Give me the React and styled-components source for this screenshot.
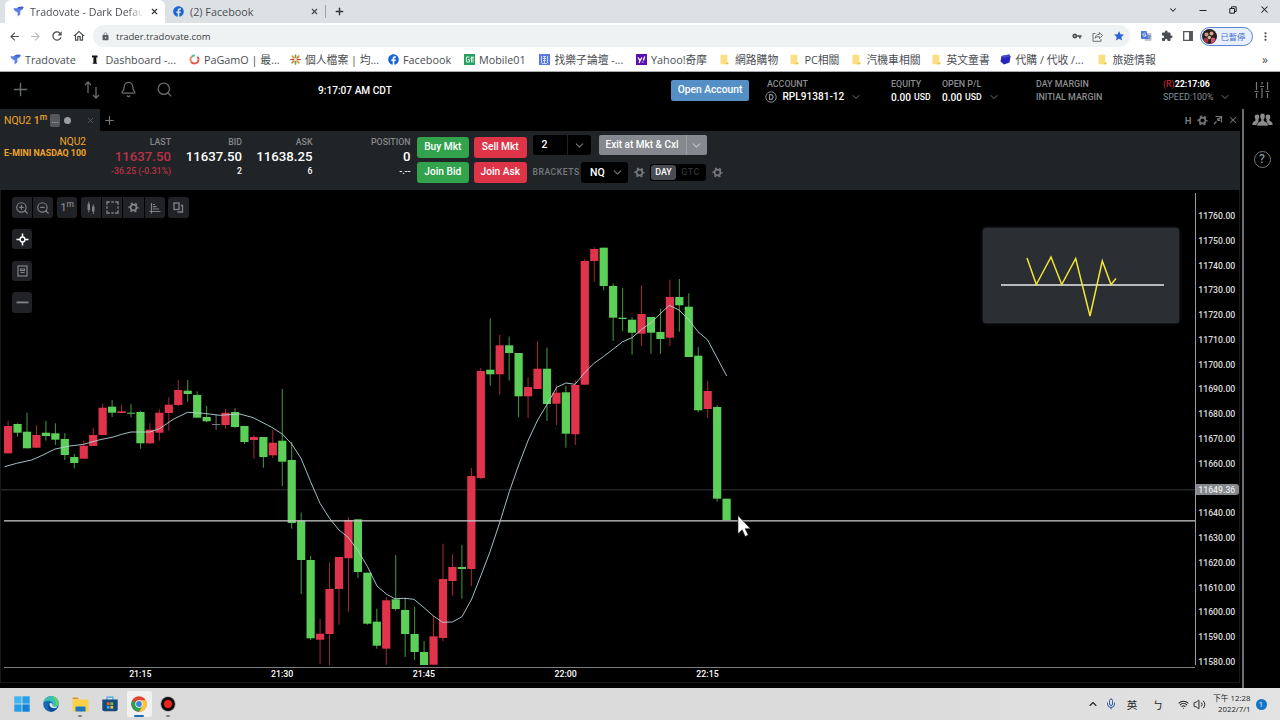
import styled, { createGlobalStyle, css } from 'styled-components'
import { FaFacebook } from 'react-icons/fa'
import { MdArrowBack, MdArrowForward, MdRefresh, MdOutlineHome, MdLock, MdVpnKey, MdStar, MdExtension, MdMoreVert } from 'react-icons/md'
import { Bell, ChevronDown, ChevronUp, Mic, Plus, Search, Volume2, Wifi, X, ZoomIn, ZoomOut } from 'lucide-react'

const UP = '#e0344c'
const DOWN = '#5bcf57'
const FLAT = '#8f9499'

// type, body top, body bottom, wick top, wick bottom
const candles = [
    ['u', 426, 453.3, 420.7, 453.3],
    ['d', 424, 432.7, 423.3, 436.7],
    ['d', 431.7, 448.3, 412.7, 448.3],
    ['u', 435, 447.7, 425.3, 448],
    ['d', 432.7, 436, 421, 440.7],
    ['d', 433.3, 439.7, 423.3, 445],
    ['d', 439, 455, 433, 460],
    ['d', 457, 463, 454, 468.3],
    ['u', 445.7, 458.7, 440.7, 458.7],
    ['u', 435, 446, 427.7, 446],
    ['u', 407.7, 435, 403.7, 435],
    ['d', 406.7, 412.7, 400, 417],
    ['u', 411.3, 413, 404.7, 413],
    ['d', 412.7, 413.7, 404, 417.3],
    ['d', 412, 443.3, 411, 448.7],
    ['u', 429.7, 443.3, 423.3, 444],
    ['u', 412.7, 432.7, 409.3, 440.7],
    ['u', 404.7, 413, 397.3, 430.7],
    ['u', 390, 405, 380, 406],
    ['d', 390.7, 394, 380, 401.7],
    ['d', 395, 417.7, 391.3, 417.7],
    ['d', 417, 421.3, 406, 422.3],
    ['f', 424, 424.8, 414.7, 430],
    ['u', 412.7, 425, 408.7, 429],
    ['d', 412, 427, 408.3, 428],
    ['d', 426, 442, 426, 444],
    ['u', 437, 440, 435, 458.7],
    ['d', 437, 457, 437, 467.7],
    ['u', 442.7, 455.3, 430, 458],
    ['d', 440.7, 461.7, 389, 486],
    ['d', 460, 523, 442, 528.7],
    ['d', 520.7, 560, 512.7, 594],
    ['d', 560, 638.3, 556, 640],
    ['u', 633.7, 639.7, 618.7, 664],
    ['u', 589, 634, 562.3, 665],
    ['u', 557, 589, 557, 624.7],
    ['u', 520, 558.3, 517.3, 611.7],
    ['d', 519.3, 572, 519.3, 578],
    ['d', 572.7, 623.7, 572.7, 624.7],
    ['d', 621.7, 645.7, 608.7, 648.7],
    ['u', 600.3, 648.7, 597.3, 664.7],
    ['d', 599.3, 609, 555, 610.7],
    ['d', 610, 634, 598, 657],
    ['d', 634, 652, 606.7, 660],
    ['d', 652, 665, 641, 665],
    ['u', 636.3, 664.7, 616, 664.7],
    ['u', 579, 638, 543.7, 641.3],
    ['u', 567, 581, 554.3, 595.7],
    ['d', 567, 569, 545, 598.7],
    ['u', 476, 569, 468, 586],
    ['u', 371, 478, 368, 479.3],
    ['d', 369.7, 374.3, 318.3, 385.7],
    ['u', 345.3, 374.3, 334.7, 394.7],
    ['d', 345.3, 353, 336.7, 380.7],
    ['d', 353, 396.3, 353, 417.3],
    ['u', 387, 396.3, 377.3, 418],
    ['u', 368.7, 389, 341, 389],
    ['d', 368.7, 404, 347.7, 421],
    ['u', 392.7, 403.7, 385.3, 425],
    ['d', 392.3, 433.7, 385.7, 447.7],
    ['u', 385, 434.3, 380.3, 445],
    ['u', 261, 384.7, 259, 384.7],
    ['u', 249, 261, 247.3, 281.7],
    ['d', 247.7, 286, 247.7, 290.3],
    ['d', 286, 317.7, 283.3, 341],
    ['d', 317.7, 319, 288, 331.3],
    ['d', 319.7, 332.7, 317.3, 354.7],
    ['u', 314, 333.7, 285.3, 345.7],
    ['d', 317, 332.7, 317, 353.7],
    ['d', 332, 339, 308.7, 354],
    ['u', 297, 337.7, 279.7, 346.3],
    ['d', 297, 305.3, 279, 331.7],
    ['d', 306.7, 357, 293.3, 357],
    ['d', 355.7, 410.3, 347, 412.3],
    ['u', 391, 409, 381, 418],
    ['d', 407, 498.7, 405, 501.7],
    ['d', 498.7, 520, 498.7, 520],
]

const average = '4.5,466.7 16.7,463.3 31.7,460 43,455 55,449 70,446 83.5,444.3 100,439.7 113.3,437 121.7,434.3 131,432 150,432 159.4,428.7 173.3,419.3 187.5,412.3 203.3,413.3 220,415.3 240,414 253.3,417.7 271.7,427.3 282.3,434 291.7,444 301,458.3 310.6,481.7 320,503.3 329.5,518.3 339,530 348.5,537.7 358,550.7 367.5,566.7 377,586 386.7,594.3 395,598.7 405,598.3 414,599.3 424,607.7 433.5,616 442.7,622.3 452.3,622 462,616.7 471.7,599 481,575.3 490,551.7 500,521.7 509.3,491.7 518.7,465 528.3,440 537.7,420 546.7,405 556.7,387.3 566,383 575,384.3 584.7,372.7 594,363.3 603.3,356.7 613.3,349 622.7,341.7 632,337.7 641.7,329.3 651,322.7 660,314 669.3,305.3 679,310 688.7,319.7 698,331.7 707.7,340 726.7,376'

const prices = Array.from({ length: 19 }, (_, i) => (11760 - i * 10).toFixed(2))

const bookmarks = [
    { icon: 'tradovate', text: 'Tradovate', width: 80.5 },
    { icon: 'dash', text: 'Dashboard -...', width: 98.5 },
    { icon: 'pagamo', text: 'PaGamO | 最...', width: 101 },
    { icon: 'slack', text: '個人檔案 | 均...', width: 98 },
    { icon: 'facebook', text: 'Facebook', width: 76 },
    { icon: 'mobile', text: 'Mobile01', width: 75.5 },
    { icon: 'forum', text: '找樂子論壇 -...', width: 96.5 },
    { icon: 'yahoo', text: 'Yahoo!奇摩', width: 83.5 },
    { icon: 'folder', text: '網路購物', width: 69.5 },
    { icon: 'folder', text: 'PC相關', width: 62 },
    { icon: 'folder', text: '汽機車相關', width: 80 },
    { icon: 'folder', text: '英文童書', width: 69.5 },
    { icon: 'buy', text: '代購 / 代收 /...', width: 96.5 },
    { icon: 'folder', text: '旅遊情報', width: 70 },
]

function TradovateLogo({ size = 11 }) {
    return (
        <svg width={size} height={size} viewBox="0 0 12 12">
            <path d="M.5 2.500h4C6 .8 9 .6 11.500 1.200 11.400 3.500 10 4.800 8 5v4L5 11.500V6.800C2.800 6.400 1 5 .5 2.500z" fill="#5b80e6" />
            <path d="M4.500 2.500C6 .8 9 .6 11.500 1.200 10.500 2.800 8.600 3.400 4.500 2.500z" fill="#3a5bc8" />
        </svg>
    )
}

function BookmarkIcon({ name }) {
    if (name === 'tradovate') return <TradovateLogo />
    if (name === 'facebook') return <FaFacebook size={11} color="#1a66d6" />
    if (name === 'dash') return (
        <svg width="11" height="11" viewBox="0 0 11 11"><path d="M2 1.500h5.500v2.400l-1-.9h-.1v5.800h.7v.9H2.600v-.9h.8V3h-.2L2 3.900z" fill="#111" /></svg>
    )
    if (name === 'pagamo') return (
        <svg width="11" height="11" viewBox="0 0 11 11" fill="none" strokeWidth="2">
            <path d="M9.5 5.5a4 4 0 0 1-4 4 4 4 0 0 1-3.5-2" stroke="#e2574a" />
            <path d="M2 7.5a4 4 0 0 1 1-5" stroke="#e98a73" />
            <path d="M3 2.500a4 4 0 0 1 3-.9" stroke="#4ec0a8" />
            <path d="M8.300 2.600a4 4 0 0 1 1.200 2.900" stroke="#e2574a" />
        </svg>
    )
    if (name === 'slack') return (
        <svg width="11" height="11" viewBox="0 0 11 11" fill="none" strokeWidth="1.700" strokeLinecap="round">
            <path d="M5.500 1v2.500M5.500 7.500V10" stroke="#6aa64a" />
            <path d="M1 5.500h2.500M7.500 5.500H10" stroke="#c9513f" />
            <path d="M2.200 2.200L4 4M7 7l1.800 1.800" stroke="#d99a3c" />
            <path d="M8.800 2.200L7 4M4 7L2.200 8.800" stroke="#d9813c" />
        </svg>
    )
    if (name === 'mobile') return (
        <svg width="11" height="11" viewBox="0 0 11 11" fill="none" stroke="#d8f3e4">
            <rect width="11" height="11" fill="#27a062" stroke="none" />
            <path d="M5.500 3H2.500v5h3V5.500H4M7.500 2.500v6M9 2.500v6M6.500 4.500L9.500 3" />
        </svg>
    )
    if (name === 'forum') return (
        <svg width="11" height="11" viewBox="0 0 11 11" fill="none" stroke="#e5ebff">
            <rect width="11" height="11" fill="#5a7ce0" stroke="none" />
            <path d="M2.500 2v7M8.500 2v7M4 2.500h3M4 4.500h3M4 6.500h3M5.500 2v7M3 9.500h5" strokeWidth=".8" />
        </svg>
    )
    if (name === 'yahoo') return (
        <svg width="11" height="11" viewBox="0 0 11 11" fill="none" stroke="#fff" strokeWidth="1.300">
            <rect width="11" height="11" fill="#5a10b0" stroke="none" />
            <path d="M2 3.500l2 3.200L5.800 3.500M4 6.700L3.200 9M8.800 2.500L7.300 6.500M6.900 7.600l-.3.9" />
        </svg>
    )
    if (name === 'buy') return (
        <svg width="11" height="11" viewBox="0 0 11 11"><path d="M1.500 2L9 .5l1.500 2-1 6L4 10.500l-3.500-3z" fill="#2626b8" /><path d="M1.500 2L9 .5l1.500 2L3 4z" fill="#4747d6" /></svg>
    )
    return (
        <svg width="11" height="11" viewBox="0 0 11 11"><path d="M1.500 .7h6.800v7.500h1v2H1.500z" fill="#fbe081" /><path d="M8.300 8.200h1v2H5.500z" fill="#e8c65b" /></svg>
    )
}

function Gear({ size = 11, color = '#75787c' }) {
    return (
        <svg width={size} height={size} viewBox="0 0 12 12" fill="none" stroke={color}>
            <circle cx="6" cy="6" r="3.200" strokeWidth="1.800" />
            <circle cx="6" cy="6" r="4.700" strokeWidth="1.600" strokeDasharray="2.300 2.622" strokeDashoffset="1.150" />
        </svg>
    )
}

function Chart() {
    return (
        <Drawing viewBox="1 190 1195 478" width="1195" height="478">
            <rect x="1" y="489.300" width="1194" height="1" fill="#343638" />
            {candles.map(([type, top, bottom, high, low], i) => {
                const x = 8.100 + i * 9.454
                const fill = type === 'u' ? UP : type === 'd' ? DOWN : FLAT
                return (
                    <g key={i} fill={fill}>
                        <rect x={x - 0.5} y={high} width="1" height={low - high} opacity=".75" />
                        <rect x={x - 4.100} y={top} width="8.200" height={bottom - top} />
                    </g>
                )
            })}
            <polyline points={average} fill="none" stroke="#b4d3da" strokeWidth=".9" />
            <rect x="4" y="520.200" width="1191" height="1.300" fill="#c4c6c4" />
            <rect x="4" y="667" width="1191" height="1" fill="#7c7d7e" />
            <rect x="1195" y="193" width="1" height="472" fill="#9a9c9e" />
            <path d="M738 515.500v18.200l4.200-3.900 3 6.700 3-1.400-3-6.400h5.200z" fill="#fff" stroke="#222" strokeWidth=".6" />
        </Drawing>
    )
}

function BrowserBar() {
    return (
        <Browser>
            <TabStrip>
                <BrowserTab $active>
                    <TradovateLogo size={11} />
                    <TabTitle $fade>Tradovate - Dark Defau</TabTitle>
                    <X size={9} strokeWidth={3} color="#333" />
                </BrowserTab>
                <BrowserTab>
                    <FaFacebook size={11} color="#1a66d6" />
                    <TabTitle>(2) Facebook</TabTitle>
                    <X size={9} strokeWidth={3} color="#444" />
                </BrowserTab>
                <NewTab><Plus size={11} strokeWidth={3} color="#333" /></NewTab>
                <WindowButtons>
                    <ChevronDown size={10} strokeWidth={2.500} />
                    <svg width="8" height="8" viewBox="0 0 8 8" stroke="#222"><path d="M.5 4.500h7" /></svg>
                    <svg width="8" height="8" viewBox="0 0 8 8" fill="none" stroke="#222"><path d="M.8 2.500h4.700v4.700H.8zM2.500 2.500v-1.700h4.700v4.700H5.500" /></svg>
                    <X size={11} strokeWidth={2.300} />
                </WindowButtons>
            </TabStrip>
            <AddressRow>
                <NavButtons>
                    <MdArrowBack size={13} />
                    <MdArrowForward size={13} color="#b6b9bc" />
                    <MdRefresh size={14} />
                    <MdOutlineHome size={14} />
                </NavButtons>
                <AddressBar>
                    <MdLock size={9} color="#5c6064" />
                    <Url>trader.tradovate.com</Url>
                    <MdVpnKey size={10} />
                    <svg width="11" height="11" viewBox="0 0 11 11" fill="none" stroke="#5f6368" strokeWidth=".9"><path d="M3.500 2.500H1v7.800h8V8M3 7.200C3.400 4.500 5 3.500 7.300 3.400V1.500l3.200 3-3.200 3V5.600C5.500 5.500 4.200 6 3 7.200z" /></svg>
                    <MdStar size={12} color="#2a63d8" />
                </AddressBar>
                <Extensions>
                    <svg width="12" height="12" viewBox="0 0 12 12">
                        <rect x="4.500" y="3" width="7" height="8" rx="1" fill="#c3c8ce" />
                        <path d="M1 1h5.500l2 8H2a1 1 0 0 1-1-1z" fill="#4a78dc" />
                        <path d="M5.700 4a1.500 1.500 0 1 0 .2 1H4.600" fill="none" stroke="#fff" strokeWidth=".8" />
                        <path d="M7.500 6h3.500M9 5v1M10.300 6c-.3 1.500-1 2.500-2 3.200M8.500 7l2 2.200" fill="none" stroke="#4a66b8" strokeWidth=".7" />
                    </svg>
                    <MdExtension size={12} />
                    <svg width="10" height="10" viewBox="0 0 10 10"><path d="M.7.7h8.600v8.600H.7z" fill="none" stroke="#55585c" strokeWidth="1.300" /><path d="M6 .7h3.300v8.600H6z" fill="#55585c" /></svg>
                </Extensions>
                <Profile>
                    <svg width="15" height="15" viewBox="0 0 15 15">
                        <circle cx="7.500" cy="7.500" r="7.500" fill="#2a2022" />
                        <circle cx="4.500" cy="5.500" r="2" fill="#c99a80" />
                        <circle cx="9.500" cy="4.500" r="2" fill="#d3a68c" />
                        <path d="M1.500 11c1-3 4-3 5 0l-1 3c-2-.3-3.300-1.500-4-3z" fill="#a33a44" />
                        <circle cx="7.300" cy="8.500" r="1.700" fill="#dcb39c" />
                        <path d="M9 9.500c2-2 4-1 4.500 1-.8 2-2.300 3.300-4.300 3.900z" fill="#d4536a" />
                    </svg>
                    已暫停
                </Profile>
                <MdMoreVert size={13} />
            </AddressRow>
            <BookmarkRow>
                {bookmarks.map((item) => (
                    <Bookmark key={item.text} $width={item.width} $folder={item.icon === 'folder'}>
                        <BookmarkIcon name={item.icon} />
                        <span>{item.text}</span>
                    </Bookmark>
                ))}
                <MoreBookmarks>»</MoreBookmarks>
            </BookmarkRow>
        </Browser>
    )
}

function TopBar() {
    return (
        <Header>
            <HeaderIcons>
                <Plus size={21} strokeWidth={1.600} />
                <svg width="16" height="20" viewBox="0 0 16 20" fill="none" stroke="currentColor" strokeWidth="1.300"><path d="M4 13V2M1 5l3-3 3 3M12 7v11M9 15l3 3 3-3" /></svg>
                <Bell size={17} strokeWidth={1.800} />
                <Search size={17} strokeWidth={1.800} />
            </HeaderIcons>
            <Clock>9:17:07 AM CDT</Clock>
            <OpenAccount>Open Account</OpenAccount>
            <Info>
                <InfoLabel>ACCOUNT</InfoLabel>
                <AccountName>
                    <svg width="12" height="12" viewBox="0 0 12 12" fill="none" stroke="#85888b"><circle cx="6" cy="6" r="5.200" /><path d="M4.500 3.700h1.200a2.300 2.300 0 0 1 0 4.600H4.500z" strokeWidth="1.200" /></svg>
                    RPL91381-12
                    <ChevronDown size={12} color="#777" />
                </AccountName>
            </Info>
            <Info>
                <InfoLabel>EQUITY</InfoLabel>
                <Money>0.00 <small>USD</small></Money>
            </Info>
            <Info>
                <InfoLabel>OPEN P/L</InfoLabel>
                <Money>0.00 <small>USD</small><ChevronDown size={12} color="#777" /></Money>
            </Info>
            <Info>
                <InfoLabel>DAY MARGIN</InfoLabel>
                <InfoLabel $second>INITIAL MARGIN</InfoLabel>
            </Info>
            <Info>
                <ReplayTime><b>(R)</b>22:17:06</ReplayTime>
                <Speed>SPEED:<span>100%</span><ChevronDown size={12} color="#777" /></Speed>
            </Info>
            <Sliders width="16" height="18" viewBox="0 0 16 18"><path d="M2.500 1v8M2.500 12v5M.5 10.500h4M8 1v2.500M8 7v10M6 5.500h4M13.500 1v8M13.500 12v5M11.500 10.500h4" /></Sliders>
        </Header>
    )
}

function Ticket() {
    return (
        <TicketBar>
            <Quote $width={86}>
                <Symbol>NQU2</Symbol>
                <SymbolName>E-MINI NASDAQ 100</SymbolName>
            </Quote>
            <Quote $width={85} $red>
                <QuoteLabel>LAST</QuoteLabel>
                <QuoteValue>11637.50</QuoteValue>
                <QuoteNote>-36.25 (-0.31%)</QuoteNote>
            </Quote>
            <Quote $width={71}>
                <QuoteLabel>BID</QuoteLabel>
                <QuoteValue>11637.50</QuoteValue>
                <QuoteNote>2</QuoteNote>
            </Quote>
            <Quote $width={70.5}>
                <QuoteLabel>ASK</QuoteLabel>
                <QuoteValue>11638.25</QuoteValue>
                <QuoteNote>6</QuoteNote>
            </Quote>
            <Quote $width={98}>
                <QuoteLabel>POSITION</QuoteLabel>
                <QuoteValue>0</QuoteValue>
                <QuoteNote>-.--</QuoteNote>
            </Quote>
            <OrderButtons>
                <OrderButton $buy>Buy Mkt</OrderButton>
                <OrderButton>Sell Mkt</OrderButton>
                <OrderButton $buy>Join Bid</OrderButton>
                <OrderButton>Join Ask</OrderButton>
            </OrderButtons>
            <OrderSettings>
                <SettingsRow>
                    <Quantity><span>2</span><i><ChevronDown size={13} /></i></Quantity>
                    <ExitButton><span>Exit at Mkt &amp; Cxl</span><i><ChevronDown size={13} /></i></ExitButton>
                </SettingsRow>
                <SettingsRow>
                    <BracketsLabel>BRACKETS</BracketsLabel>
                    <BracketSelect>NQ<ChevronDown size={13} color="#777" /></BracketSelect>
                    <GearSlot><Gear /></GearSlot>
                    <Toggle><b>DAY</b><span>GTC</span></Toggle>
                    <GearSlot><Gear /></GearSlot>
                </SettingsRow>
            </OrderSettings>
        </TicketBar>
    )
}

function ChartTools() {
    return (
        <Tools>
            <ToolRow>
                <ToolGroup>
                    <Tool><ZoomIn size={14} /></Tool>
                    <Tool><ZoomOut size={14} /></Tool>
                </ToolGroup>
                <ToolGroup>
                    <Tool>1<sup>m</sup></Tool>
                </ToolGroup>
                <ToolGroup>
                    <Tool><svg width="12" height="14" viewBox="0 0 12 14" fill="currentColor"><path d="M2.500 3h2.500v6H2.500zM7 5.500h2.500v5H7zM3.300 .8h1v10.500h-1zM7.800 3.500h1v9.500h-1z" /></svg></Tool>
                    <Tool><svg width="13" height="13" viewBox="0 0 13 13" fill="none" stroke="currentColor" strokeWidth="1.300"><path d="M1 3.800V1h2.800M5.300 1h2.400M9.200 1H12v2.800M12 5.300v2.400M12 9.200V12H9.200M7.700 12H5.300M3.800 12H1V9.200M1 7.700V5.300" /></svg></Tool>
                    <Tool><Gear size={11} color="currentColor" /></Tool>
                    <Tool><svg width="12" height="12" viewBox="0 0 12 12" fill="none" stroke="currentColor" strokeWidth="1.200"><path d="M2.500 1v10.500M.5 9.500h11M4 2.500h2M4 4.700h3.500M4 7h6" /></svg></Tool>
                </ToolGroup>
                <ToolGroup>
                    <Tool><svg width="11" height="11" viewBox="0 0 11 11" fill="none" stroke="currentColor" strokeWidth="1.300"><rect x="1" y="1" width="5" height="6.500" /><path d="M4.500 10h5V3.500H8" /></svg></Tool>
                </ToolGroup>
            </ToolRow>
            <Tool $bright $single><svg width="13" height="13" viewBox="0 0 13 13" fill="none" stroke="currentColor" strokeWidth="1.500"><circle cx="6.500" cy="6.500" r="2.400" /><path d="M6.500 .5v3.500M6.500 9v3.500M.5 6.500H4M9 6.500h3.500" /></svg></Tool>
            <Tool $single><svg width="11" height="12" viewBox="0 0 11 12" fill="none" stroke="currentColor" strokeWidth="1.200"><rect x="1" y="1" width="9" height="10" /><path d="M3.500 4h4v1.500h-4zM3.500 7.500h4" /></svg></Tool>
            <Tool $single><svg width="13" height="3" viewBox="0 0 13 3"><path d="M.5.5h12v1.800H.5z" fill="currentColor" /></svg></Tool>
        </Tools>
    )
}

function Taskbar() {
    return (
        <Task>
            <TaskApp><svg width="16" height="16" viewBox="0 0 16 16" fill="#1583d8"><path d="M.3.3h7.300v7.300H.3z" fill="#43b4f0" /><path d="M8.400.3h7.300v7.300H8.400z" fill="#279fe6" /><path d="M.3 8.400h7.300v7.300H.3z" fill="#279fe6" /><path d="M8.400 8.400h7.300v7.300H8.400z" /></svg></TaskApp>
            <TaskApp>
                <svg width="16" height="16" viewBox="0 0 16 16">
                    <circle cx="8" cy="8" r="7.800" fill="#1769b8" />
                    <path d="M.3 7C1 2.800 4.200.2 8 .2c5 0 7.900 3.600 7.800 7 0 2.400-1.800 3.900-4 3.900-1.700 0-2.600-.7-2.200-1.500C10.800 7 8.300 4.500 5 4.700 2.900 4.800 1.200 5.600.3 7z" fill="#35c1b0" />
                    <path d="M9 .3c4.500.5 6.900 3.800 6.800 7 0 2.300-1.800 3.800-4 3.800 2-3.500 1-8-2.800-10.800z" fill="#5fd06a" />
                    <path d="M6.500 6.500c-1.500 3 .8 7.300 7 5.900-1.300 2-3.400 3.300-5.700 3.400C5 14.500 4 9.500 6.500 6.500z" fill="#114a94" />
                    <path d="M6.700 7.500c-.6 2.500 1.600 4.600 4.500 4.600 1.300 0 2.200-.4 3-.9-1-.2-4.500-.2-4.600-1.600.7-1.900-1.900-3.600-2.900-2.100z" fill="#dfe9ee" />
                </svg>
            </TaskApp>
            <TaskApp $mark="small"><svg width="17" height="15" viewBox="0 0 17 15"><path d="M.5 1.500a1 1 0 0 1 1-1h4l1.800 1.800H.5z" fill="#d8971c" /><path d="M.5 2.500h15a1 1 0 0 1 1 1v10a1 1 0 0 1-1 1h-14a1 1 0 0 1-1-1z" fill="#fcd04a" /><path d="M3.500 10.500a1 1 0 0 1 1-1h8a1 1 0 0 1 1 1v4h-10z" fill="#1b78c2" /></svg></TaskApp>
            <TaskApp><svg width="16" height="16" viewBox="0 0 16 16"><path d="M5 4V1.200h6V4" fill="none" stroke="#3aa9e0" strokeWidth="1.200" /><path d="M.3 3.500h15.400v9.800a2 2 0 0 1-2 2H2.300a2 2 0 0 1-2-2z" fill="#17497a" /><path d="M4.800 6.300h2.800v2.800H4.800z" fill="#e8622d" /><path d="M8.400 6.300h2.800v2.800H8.400z" fill="#7fba3a" /><path d="M4.800 9.900h2.800v2.800H4.800z" fill="#35a7e8" /><path d="M8.400 9.900h2.800v2.800H8.400z" fill="#f6c12e" /></svg></TaskApp>
            <TaskApp $active $mark="wide">
                <svg width="16" height="16" viewBox="0 0 16 16">
                    <circle cx="8" cy="8" r="7.700" fill="#e04434" />
                    <path d="M8 8L1.330 4.150A7.700 7.700 0 0 0 8 15.700l3.330-5.770z" fill="#2ea04f" />
                    <path d="M8 4.150h6.670A7.700 7.700 0 0 1 8 15.700l3.330-5.770z" fill="#fbc92f" />
                    <circle cx="8" cy="8" r="3.700" fill="#fff" />
                    <circle cx="8" cy="8" r="2.900" fill="#3f7fe0" />
                </svg>
            </TaskApp>
            <TaskApp $mark="small"><svg width="16" height="16" viewBox="0 0 16 16"><circle cx="8" cy="8" r="7.800" fill="#a9a9a9" /><circle cx="8" cy="8" r="6.900" fill="#0b0b0b" /><circle cx="8" cy="8" r="4.200" fill="#e52620" /></svg></TaskApp>
            <Tray>
                <ChevronUp size={12} strokeWidth={2.200} />
                <Mic size={12} strokeWidth={2} color="#2f5fa8" />
                <TrayText>英</TrayText>
                <TrayText>ㄅ</TrayText>
                <Wifi size={11} strokeWidth={2.200} />
                <Volume2 size={13} strokeWidth={1.800} />
                <DateBlock><span>下午 12:28</span><span>2022/7/1</span></DateBlock>
                <Notice>1</Notice>
            </Tray>
        </Task>
    )
}

export default function App() {
    return (
        <Screen>
            <GlobalStyle />
            <BrowserBar />
            <TopBar />
            <Workspace>
                <Main>
                    <ModuleTabs>
                        <ModuleTab>
                            <span>NQU2 <b>1<sup>m</sup></b></span>
                            <Dots>...</Dots>
                            <Dot />
                            <X size={9} color="#666" />
                        </ModuleTab>
                        <Plus size={13} strokeWidth={2.200} color="#777" />
                        <ModuleActions>
                            <b>H</b>
                            <Gear />
                            <svg width="10" height="10" viewBox="0 0 10 10" fill="none" stroke="#75787c" strokeWidth="1.200"><path d="M2.500 1.500h6v6M8 2L4.500 5.500M4.800 3v2.500h2.500M3.500 6.500l-2.500 2.500" /></svg>
                            <X size={10} strokeWidth={2.500} color="#777" />
                        </ModuleActions>
                    </ModuleTabs>
                    <Ticket />
                    <ChartPanel>
                        <Plot>
                            <Chart />
                            <TimeAxis>
                                <span>21:15</span>
                                <span>21:30</span>
                                <span>21:45</span>
                                <span>22:00</span>
                                <span>22:15</span>
                            </TimeAxis>
                            <ChartTools />
                            <Pattern>
                                <svg width="196" height="95" viewBox="983 228 196 95" fill="none">
                                    <path d="M1001 285h163" stroke="#e8e8e8" strokeWidth="1.600" />
                                    <path d="M1027 258l9.300 26.500L1051 257l10.700 27.500L1075.700 258.500l14.300 57.500 12.300-55 8.700 23.500 5-6" stroke="#f0e636" strokeWidth="1.500" />
                                </svg>
                            </Pattern>
                        </Plot>
                        <PriceAxis>
                            {prices.map((price) => <span key={price}>{price}</span>)}
                            <PriceTag>11649.36</PriceTag>
                        </PriceAxis>
                    </ChartPanel>
                </Main>
                <Side>
                    <svg width="21" height="14" viewBox="0 0 21 14" fill="#8a8c8e">
                        <circle cx="5" cy="4" r="2.400" /><circle cx="16" cy="4" r="2.400" />
                        <path d="M.3 12c0-3 2-3.500 3.200-4.500V5h3v2.500L6 12zM20.700 12c0-3-2-3.500-3.200-4.500V5h-3v2.500l.5 4.500z" />
                        <path d="M10.500.3c1.800 0 2.800 1.200 2.700 3-.1 1.500-.6 2.400-1.200 3v1.500c1 .9 4.200 1.200 4.400 5.200H4.600c.2-4 3.400-4.300 4.400-5.200V6.300c-.6-.6-1.100-1.500-1.200-3C7.700 1.500 8.700.3 10.500.3z" stroke="#000" strokeWidth=".7" />
                    </svg>
                    <Help>?</Help>
                </Side>
            </Workspace>
            <Taskbar />
        </Screen>
    )
}

const GlobalStyle = createGlobalStyle`
    * {
        box-sizing: border-box;
    }
    body {
        margin: 0;
        background-color: #000000;
    }
    svg {
        display: block;
        flex-shrink: 0;
    }
`

const Screen = styled.div`
    display: flex;
    flex-direction: column;
    width: 1280px;
    height: 720px;
    overflow: hidden;
    background-color: #000000;
    font-family: Roboto, 'Liberation Sans', sans-serif;
    color: #ffffff;
    white-space: nowrap;
`

const Browser = styled.div`
    height: 72px;
    background-color: #ffffff;
    border-bottom: 1px solid #a9abad;
    font-family: 'Open Sans', 'Noto Sans CJK TC', sans-serif;
    color: #4a4d51;
`

const TabStrip = styled.div`
    display: flex;
    height: 23px;
    padding-left: 5px;
    background-color: #dee1e4;
`

const BrowserTab = styled.div`
    display: flex;
    align-items: center;
    width: 160px;
    height: 23px;
    padding: 0 6px 0 8px;
    gap: 6px;

    ${props => props.$active && css`
        background-color: #ffffff;
        border-radius: 6px 6px 0 0;
    `}
`

const TabTitle = styled.span`
    flex: 1;
    overflow: hidden;
    font-size: 10.800px;
    line-height: 22px;

    ${props => props.$fade && css`
        font-size: 10.600px;
        mask-image: linear-gradient(90deg, #000 85%, transparent 100%);
    `}
`

const NewTab = styled.div`
    display: flex;
    align-items: center;
    height: 13px;
    margin-top: 5px;
    padding-left: 8px;
    border-left: 1px solid #a0a3a6;
`

const WindowButtons = styled.div`
    display: flex;
    align-items: center;
    gap: 21.800px;
    height: 19px;
    margin-left: auto;
    padding-right: 10px;
    color: #222222;
`

const AddressRow = styled.div`
    display: flex;
    align-items: center;
    height: 26px;
    padding-left: 8px;
`

const NavButtons = styled.div`
    display: flex;
    align-items: center;
    gap: 8px;
    width: 85px;
`

const AddressBar = styled.div`
    display: flex;
    align-items: center;
    width: 1037px;
    height: 22px;
    padding: 0 5px 0 8px;
    gap: 10px;
    border-radius: 11px;
    background-color: #eff2f3;
`

const Url = styled.span`
    flex: 1;
    margin-left: -4px;
    font-size: 9.500px;
    color: #3a3d41;
`

const Extensions = styled.div`
    display: flex;
    align-items: center;
    gap: 9.500px;
    margin-left: 9.500px;
`

const Profile = styled.div`
    display: flex;
    align-items: center;
    gap: 4px;
    width: 53px;
    height: 19px;
    margin: 0 6px 0 7px;
    padding-left: 1px;
    border: 1px solid #5b83d6;
    border-radius: 10px;
    background-color: #e9f0fd;
    color: #3c6cd0;
    font-size: 8.300px;
`

const BookmarkRow = styled.div`
    display: flex;
    align-items: center;
    height: 21px;
    padding-left: 9.500px;
`

const Bookmark = styled.div`
    display: flex;
    align-items: center;
    gap: ${props => props.$folder ? 5 : 4.500}px;
    width: ${props => props.$width}px;
    font-size: 10.800px;
    line-height: 20px;
`

const MoreBookmarks = styled.span`
    margin-left: auto;
    padding-right: 12px;
    font-size: 12px;
`

const Header = styled.div`
    display: grid;
    grid-template-columns: 318px 353px 96px 124px 51px 94px 127px 91px 26px;
    align-items: center;
    height: 37px;
`

const HeaderIcons = styled.div`
    display: flex;
    align-items: center;
    height: 35px;
    margin-top: -2px;
    padding-left: 10px;
    color: #6a6d70;

    svg:nth-child(2) {
        margin-left: 53px;
    }
    svg:nth-child(3) {
        margin-left: 20px;
    }
    svg:nth-child(4) {
        margin-left: 19px;
    }
`

const Sliders = styled.svg`
    margin-top: -2px;
    fill: none;
    stroke: #777a7d;
    stroke-width: 1.200px;
`

const Clock = styled.span`
    font-size: 10.150px;
    font-weight: 500;
`

const OpenAccount = styled.div`
    width: 78px;
    height: 21px;
    border-radius: 2px;
    background-color: #5490c6;
    font-size: 10.250px;
    font-weight: 500;
    line-height: 20px;
    text-align: center;
`

const Info = styled.div`
    display: flex;
    flex-direction: column;
    height: 26px;
`

const InfoLabel = styled.span`
    height: 13px;
    padding-top: ${props => props.$second ? 0.5 : 0}px;
    color: #8a8d90;
    font-size: 8.900px;
    font-weight: 500;
    line-height: 12px;
`

const AccountName = styled.div`
    display: flex;
    align-items: center;
    height: 12px;
    margin-left: -2px;
    gap: 5.500px;
    font-size: 10.100px;
    font-weight: 500;
`

const Money = styled.div`
    display: flex;
    align-items: center;
    gap: 3px;
    height: 13px;
    font-size: 10.100px;
    font-weight: 500;

    small {
        font-size: 8.700px;
    }
    svg {
        margin-left: 3px;
    }
`

const ReplayTime = styled.span`
    height: 13px;
    font-size: 8.800px;
    font-weight: 700;
    line-height: 12px;

    b {
        color: #b52a26;
        font-weight: 500;
    }
`

const Speed = styled.div`
    display: flex;
    align-items: center;
    height: 13px;
    color: #7f939c;
    font-size: 8.900px;

    span {
        color: #8a8d90;
    }
    svg {
        margin-left: 6px;
    }
`

const Workspace = styled.div`
    display: flex;
    height: 579px;
`

const Main = styled.div`
    width: 1242px;
`

const ModuleTabs = styled.div`
    display: flex;
    align-items: center;
    gap: 3px;
    height: 22px;
`

const ModuleTab = styled.div`
    display: flex;
    align-items: center;
    width: 100px;
    height: 22px;
    padding: 0 5px 0 4px;
    background-color: #212427;
    color: #f0a52a;
    font-size: 10.400px;

    b {
        font-weight: 500;
    }
    sup {
        font-size: 8.500px;
        line-height: 0;
    }
    > svg {
        margin-left: auto;
    }
`

const Dots = styled.span`
    width: 10px;
    height: 13px;
    margin: 0 4px 0 3px;
    border-radius: 2px;
    background-color: #55585e;
    color: #dddddd;
    font-size: 9px;
    line-height: 12px;
    text-align: center;
`

const Dot = styled.span`
    width: 7px;
    height: 7px;
    border-radius: 50%;
    background-color: #9b9da0;
`

const ModuleActions = styled.div`
    display: flex;
    align-items: center;
    gap: 5px;
    margin-left: auto;
    padding-right: 4.500px;
    color: #777a7d;
    font-size: 9.500px;
`

const TicketBar = styled.div`
    display: flex;
    width: 1240px;
    height: 59px;
    padding-top: 4px;
    background-color: #212427;
`

const Quote = styled.div`
    display: flex;
    flex-direction: column;
    align-items: flex-end;
    width: ${props => props.$width}px;
    color: ${props => props.$red ? '#b93247' : '#ffffff'};
`

const QuoteLabel = styled.span`
    color: #85888b;
    font-size: 8.800px;
    font-weight: 500;
    line-height: 14px;
`

const QuoteValue = styled.span`
    font-size: 13.200px;
    font-weight: 500;
    line-height: 15px;
`

const QuoteNote = styled.span`
    font-size: 8.700px;
    font-weight: 500;
    line-height: 14px;
`

const Symbol = styled.span`
    color: #f0a52a;
    font-size: 10.200px;
    line-height: 13px;
`

const SymbolName = styled.span`
    color: #f0a52a;
    font-size: 8.800px;
    font-weight: 700;
    line-height: 11px;
`

const OrderButtons = styled.div`
    display: grid;
    grid-template-columns: 52.500px 52.500px;
    gap: 4px 5px;
    height: 46px;
    margin: 1.500px 0 0 6px;
`

const OrderButton = styled.div`
    height: 21px;
    border-radius: 3px;
    background-color: ${props => props.$buy ? '#32a24d' : '#dd3448'};
    font-size: 10.200px;
    font-weight: 500;
    line-height: 20px;
    text-align: center;
`

const OrderSettings = styled.div`
    display: flex;
    flex-direction: column;
    gap: 7px;
    margin-left: 6px;
`

const SettingsRow = styled.div`
    display: flex;
    align-items: center;
    height: 20px;
`

const Quantity = styled.div`
    display: flex;
    width: 58px;
    height: 20px;
    margin-right: 8px;
    border-radius: 3px;
    background-color: #000000;
    font-size: 10.500px;
    font-weight: 500;
    line-height: 20px;

    span {
        width: 34px;
        padding-left: 9px;
    }
    i {
        display: flex;
        flex: 1;
        align-items: center;
        justify-content: center;
        border-left: 1px solid #202225;
        color: #777777;
    }
`

const ExitButton = styled.div`
    display: flex;
    width: 108px;
    height: 20px;
    border-radius: 2px;
    background-color: #85888f;
    font-size: 10px;
    font-weight: 500;
    line-height: 20px;

    span {
        width: 87px;
        padding-left: 7px;
    }
    i {
        display: flex;
        flex: 1;
        align-items: center;
        justify-content: center;
        border-left: 1px solid #9a9da2;
        color: #c0c2c6;
    }
`

const BracketsLabel = styled.span`
    width: 48.500px;
    color: #77797c;
    font-size: 8.600px;
    font-weight: 500;
    letter-spacing: 0.550px;
`

const BracketSelect = styled.div`
    display: flex;
    align-items: center;
    gap: 6px;
    width: 47px;
    height: 21px;
    padding-left: 9px;
    border-radius: 3px;
    background-color: #000000;
    font-size: 10.500px;
    font-weight: 500;
`

const GearSlot = styled.div`
    display: flex;
    justify-content: center;
    width: 22px;
`

const Toggle = styled.div`
    display: flex;
    align-items: center;
    width: 56px;
    height: 17px;
    padding: 1px;
    border-radius: 3px;
    background-color: #000000;
    font-size: 8.900px;
    line-height: 15px;
    text-align: center;

    b {
        width: 25px;
        border-radius: 3px;
        background-color: #4a4c53;
        font-weight: 500;
    }
    span {
        flex: 1;
        color: #3c3e41;
        letter-spacing: 0.500px;
    }
`

const ChartPanel = styled.div`
    display: flex;
    width: 1240px;
    height: 493px;
    border: solid #18191b;
    border-width: 0 1px 1px 1px;
`

const Plot = styled.div`
    position: relative;
    width: 1195px;
`

const Drawing = styled.svg`
    display: block;
`

const TimeAxis = styled.div`
    display: flex;
    padding-left: 68.400px;
    font-size: 8.800px;
    font-weight: 500;
    line-height: 12px;

    span {
        width: 141.800px;
        text-align: center;
    }
`

const PriceAxis = styled.div`
    position: relative;
    display: flex;
    flex-direction: column;
    flex: 1;
    padding: 14.100px 0 0 2.300px;
    color: #dcdddd;
    font-size: 8.700px;
    font-weight: 500;

    span {
        height: 24.780px;
        line-height: 24.780px;
    }
`

const PriceTag = styled.div`
    position: absolute;
    top: 294px;
    left: 0;
    width: 43px;
    height: 11px;
    padding-left: 2.300px;
    border-radius: 0 3px 3px 0;
    background-color: #85888c;
    color: #e8e8e8;
    line-height: 12px;
`

const Tools = styled.div`
    position: absolute;
    top: 7.300px;
    left: 11px;
    display: flex;
    flex-direction: column;
    gap: 11.200px;
`

const ToolRow = styled.div`
    display: flex;
    gap: 3.700px;
`

const ToolGroup = styled.div`
    display: flex;
    gap: 1px;
    border-radius: 3px;
    overflow: hidden;
`

const Tool = styled.div`
    display: flex;
    align-items: center;
    justify-content: center;
    width: 20.200px;
    height: 20.500px;
    border-radius: ${props => props.$single ? 3 : 0}px;
    background-color: #202225;
    color: ${props => props.$bright ? '#ffffff' : '#808387'};
    font-size: 11px;
    font-weight: 500;

    sup {
        margin-top: -7px;
        font-size: 8.500px;
    }
`

const Pattern = styled.div`
    position: absolute;
    top: 38px;
    left: 982px;
    width: 196px;
    height: 95px;
    border-radius: 3px;
    background-color: #2b2e32;
    box-shadow: 0 0 3px #3a3b3d;
`

const Side = styled.div`
    display: flex;
    flex-direction: column;
    align-items: center;
    gap: 24px;
    width: 38px;
    padding-top: 4px;
    border-left: 2px solid #6b6c6d;
`

const Help = styled.div`
    width: 17px;
    height: 17px;
    border: 1.500px solid #77797b;
    border-radius: 50%;
    color: #8a8c8e;
    font-size: 12px;
    font-weight: 500;
    line-height: 15px;
    text-align: center;
`

const Task = styled.div`
    display: flex;
    align-items: center;
    gap: 4.400px;
    height: 32px;
    padding-left: 9px;
    background: linear-gradient(90deg, #dbdbdb 70%, #e3e3e3 100%);
    font-family: 'Open Sans', 'Noto Sans CJK TC', sans-serif;
    color: #222222;
`

const TaskApp = styled.div`
    position: relative;
    display: flex;
    align-items: center;
    justify-content: center;
    width: 25px;
    height: 26px;
    border-radius: 2px;
    background-color: ${props => props.$active ? '#f1f1f1' : 'transparent'};

    ${props => props.$mark && css`
        &::after {
            content: '';
            position: absolute;
            bottom: 0.500px;
            width: ${props.$mark === 'wide' ? 10 : 4}px;
            height: 2px;
            border-radius: 1px;
            background-color: ${props.$mark === 'wide' ? '#1f6dbb' : '#808080'};
        }
    `}
`

const Tray = styled.div`
    display: flex;
    align-items: center;
    margin-left: auto;
    padding-right: 13.500px;

    > svg:nth-child(2) {
        margin: 0 2px 0 6.500px;
    }
    > svg:nth-child(5) {
        margin-left: 6.500px;
    }
    > svg:nth-child(6) {
        margin-left: 4px;
    }
`

const TrayText = styled.span`
    width: 26px;
    font-size: 10.500px;
    text-align: center;
`

const DateBlock = styled.div`
    display: flex;
    flex-direction: column;
    align-items: flex-end;
    width: 45px;
    font-size: 7.800px;
    line-height: 11px;
`

const Notice = styled.div`
    width: 11px;
    height: 11px;
    margin-left: 5px;
    border-radius: 50%;
    background-color: #1276c8;
    color: #ffffff;
    font-size: 7.500px;
    line-height: 11px;
    text-align: center;
`
